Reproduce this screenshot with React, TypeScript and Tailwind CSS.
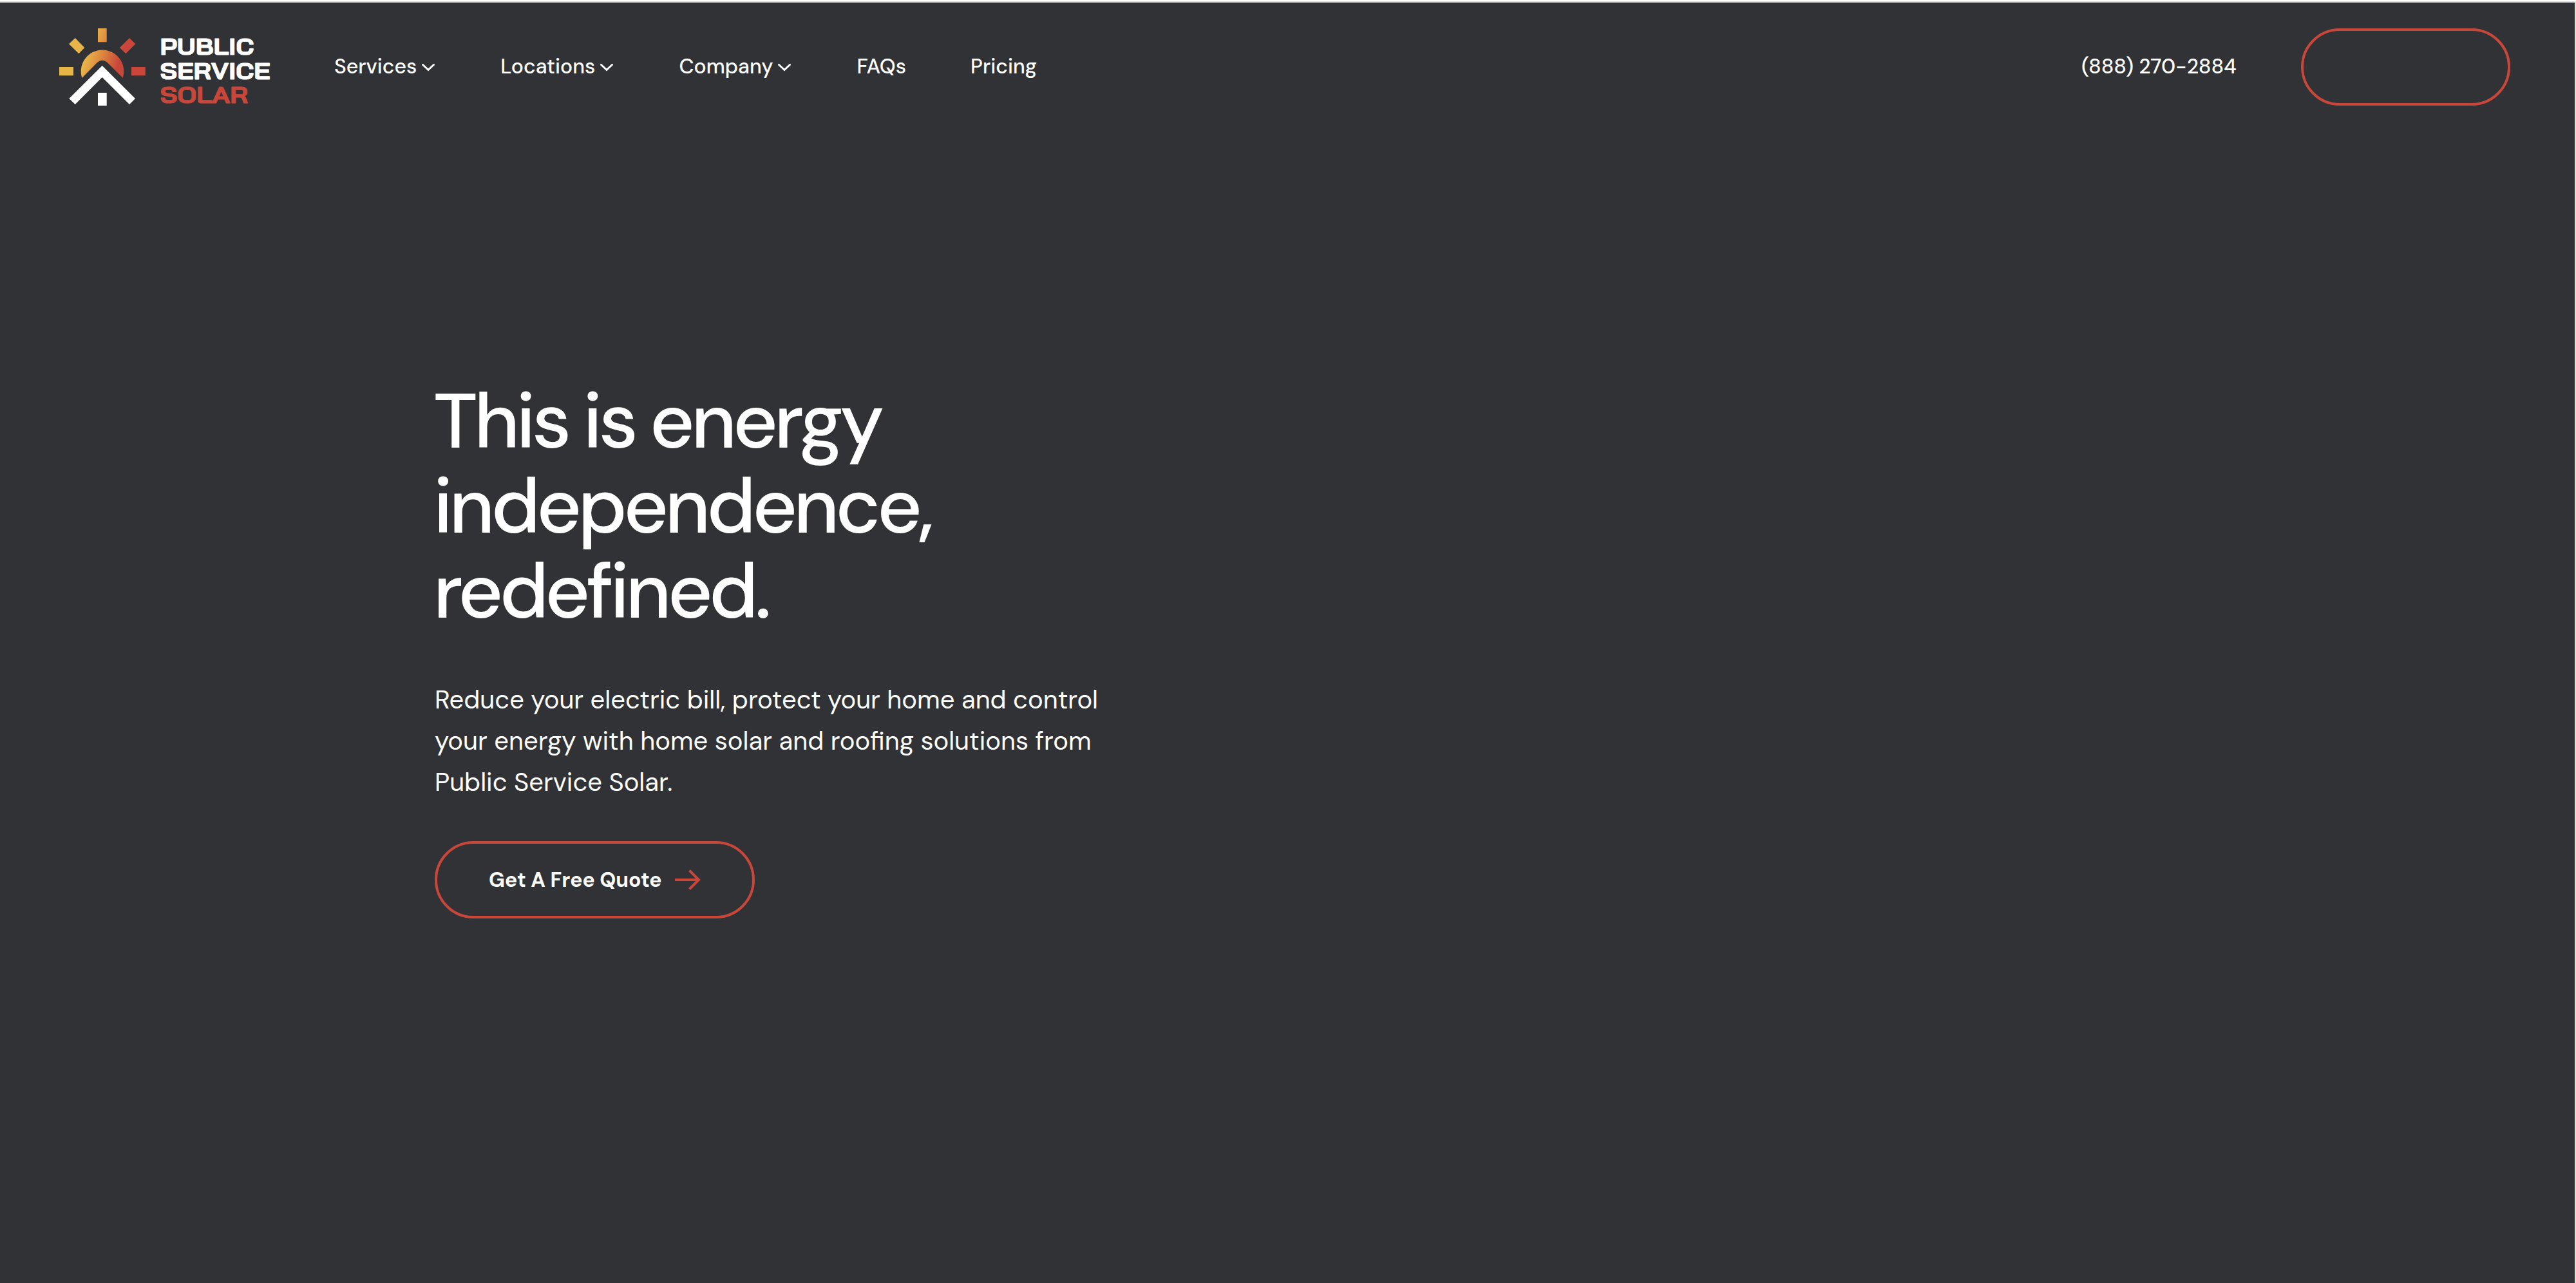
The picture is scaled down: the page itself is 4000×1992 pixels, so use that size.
import React from "react";

const navItems = [
  { label: "Services", menu: true },
  { label: "Locations", menu: true },
  { label: "Company", menu: true },
  { label: "FAQs", menu: false },
  { label: "Pricing", menu: false },
];

const Logo = () => (
  <svg width="328" height="120" viewBox="0 0 328 120" className="shrink-0 overflow-visible">
    <defs>
      <linearGradient id="sun" gradientUnits="userSpaceOnUse" x1="40" y1="50" x2="88" y2="66">
        <stop offset="0" stopColor="#e8b548" />
        <stop offset="0.5" stopColor="#db803f" />
        <stop offset="1" stopColor="#c9473a" />
      </linearGradient>
    </defs>
    {/* Sun and rays */}
    <g fill="url(#sun)">
      <path d="M60 0h13.7v21.3H60z" />
      <path d="M0 60h22v13.3H0z" />
      <path d="M112 60h21.7v13.3H112z" />
      <path d="M24.7 15L39.3 30L30.3 39.3L15 24.3z" />
      <path d="M109 15L118.3 24.3L103.3 39.3L94 30z" />
      <path d="M35.3 77A33.3 33.3 0 1 1 98.7 77L74.7 53Q66.8 46.5 59 53z" />
    </g>
    {/* House */}
    <path fill="#fff" d="M66.7 58L118 109L109 118L66.7 76L24.7 118L15.3 109z" />
    <path fill="#fff" d="M60 100h13.7v20H60z" />
    <g
      fontFamily="'Bai Jamjuree', Inter, sans-serif"
      fontWeight="700"
      fontSize="34.5"
      strokeWidth="0.9"
      strokeLinejoin="round"
    >
      <text x="156.6" y="41.2" fill="#fff" stroke="#fff" textLength="145.5" lengthAdjust="spacingAndGlyphs">
        PUBLIC
      </text>
      <text x="156.6" y="78.5" fill="#fff" stroke="#fff" textLength="171" lengthAdjust="spacingAndGlyphs">
        SERVICE
      </text>
      <text x="156.6" y="116.2" fill="#c9473a" stroke="#c9473a" textLength="136.5" lengthAdjust="spacingAndGlyphs">
        SOLAR
      </text>
    </g>
  </svg>
);

const Chevron = () => (
  <svg
    width="20"
    height="14"
    viewBox="0 0 20 14"
    fill="none"
    stroke="#fff"
    strokeWidth="3"
    strokeLinecap="round"
    className="mt-1 mr-0.5"
  >
    <path d="M1.5 2.5L10 10.5L18.5 2.5" />
  </svg>
);

const App = () => {
  return (
    <div className="h-[1992px] w-full border-t-2 border-white bg-[#dfdfd9] pt-0.5">
      <main className="mr-0.5 h-[1988px] bg-[#313235] font-['DM_Sans',Lato,sans-serif] text-white">
        {/* Header */}
        <header className="flex h-[200px] items-center pl-[92px] pr-[100px] text-[32px] font-medium">
          <Logo />
          <nav className="ml-[99px] -mt-0.5 flex items-center gap-[100px]">
            {navItems.map((item) => (
              <a key={item.label} href="#" className="flex items-center gap-2">
                {item.label}
                {item.menu && <Chevron />}
              </a>
            ))}
          </nav>
          <a href="#" className="-mt-0.5 ml-auto">
            (888) 270-2884
          </a>
          <a
            href="#"
            className="ml-[100px] h-[120px] w-[325px] rounded-full border-4 border-[#c9473a]"
          />
        </header>

        {/* Hero */}
        <section className="pl-[675px] pt-[384px]">
          <h1 className="-ml-0.5 text-[120px] font-medium leading-[132px] tracking-[-5.4px] [word-spacing:-2px]">
            This is energy
            <br />
            independence,
            <br />
            redefined.
          </h1>
          <p className="mt-[70px] text-[40px] leading-[64px] [word-spacing:-0.2px]">
            Reduce your electric bill, protect your home and control
            <br />
            your energy with home solar and roofing solutions from
            <br />
            Public Service Solar.
          </p>
          <a
            href="#"
            className="mt-[60px] flex h-[120px] w-[497px] items-center rounded-full border-4 border-[#c9473a] pl-20 text-[32px] font-bold"
          >
            Get A Free Quote
            <svg
              width="42"
              height="34"
              viewBox="0 0 42 34"
              fill="none"
              stroke="#c9473a"
              strokeWidth="4"
              className="ml-5"
            >
              <path d="M0 17H37M22.5 2.5L37 17L22.5 31.5" />
            </svg>
          </a>
        </section>
      </main>
    </div>
  );
};

export default App;
